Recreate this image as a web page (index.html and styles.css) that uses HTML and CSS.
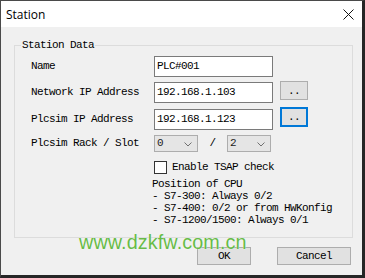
FILE: index.html
```html
<!DOCTYPE html>
<html>
<head>
<meta charset="utf-8">
<title>Station</title>
<link rel="stylesheet" href="styles.css">
</head>
<body>
<div class="window">
  <div class="titlebar">
    <span class="title">Station</span>
    <svg class="close" width="11" height="11" viewBox="0 0 11 11"><path d="M0.5 0.5 L10.5 10.5 M10.5 0.5 L0.5 10.5" stroke="#111" stroke-width="1" fill="none"/></svg>
  </div>
  <div class="content">
    <div class="group">
      <span class="legend">Station Data</span>
      <div class="row">
        <span class="lbl">Name</span>
        <div class="input">PLC#001</div>
      </div>
      <div class="row row-tall">
        <span class="lbl">Network IP Address</span>
        <div class="input">192.168.1.103</div>
        <div class="dots">..</div>
      </div>
      <div class="row">
        <span class="lbl">Plcsim IP Address</span>
        <div class="input">192.168.1.123</div>
        <div class="dots focused">..</div>
      </div>
      <div class="row row-combo">
        <span class="lbl lbl-combo">Plcsim Rack / Slot</span>
        <div class="combo"><span>0</span><svg width="8" height="5" viewBox="0 0 8 5"><path d="M0.5 0.5 L4 4 L7.5 0.5" stroke="#707070" fill="none"/></svg></div>
        <span class="slash">/</span>
        <div class="combo"><span>2</span><svg width="8" height="5" viewBox="0 0 8 5"><path d="M0.5 0.5 L4 4 L7.5 0.5" stroke="#707070" fill="none"/></svg></div>
      </div>
      <div class="extra">
        <div class="check"><span class="box"></span><span class="check-text">Enable TSAP check</span></div>
        <div class="info">
          <div>Position of CPU</div>
          <div>- S7-300: Always 0/2</div>
          <div>- S7-400: 0/2 or from HWKonfig</div>
          <div>- S7-1200/1500: Always 0/1</div>
        </div>
      </div>
    </div>
    <div class="buttons">
      <div class="btn ok">OK</div>
      <div class="btn cancel">Cancel</div>
    </div>
  </div>
  <div class="watermark">www.dzkfw.com.cn</div>
</div>
</body>
</html>
```
FILE: styles.css
```css
html, body {
  margin: 0;
  padding: 0;
  background: #222;
}
body {
  font-family: "Liberation Mono", "DejaVu Sans Mono", monospace;
  font-size: 11px;
  letter-spacing: -0.6px;
  color: #000;
}
.window {
  position: relative;
  width: 365px;
  height: 278px;
  box-sizing: border-box;
  border-style: solid;
  border-width: 1px 3px 3px 1px;
  border-color: #4a4a4a #262626 #262626 #4a4a4a;
  background: #f0f0f0;
  overflow: hidden;
}
.titlebar {
  height: 26px;
  background: #fff;
  display: flex;
  align-items: center;
  padding: 0 8px 0 5px;
}
.title {
  font-family: "Open Sans", "Noto Sans", sans-serif;
  font-size: 12px;
  letter-spacing: 0;
  color: #000;
}
.close {
  margin-left: auto;
  display: block;
}
.content {
  padding: 18px 9px 0 13px;
}
.group {
  position: relative;
  height: 193px;
  box-sizing: border-box;
  border: 1px solid #dcdcdc;
  padding: 10px 0 0 16px;
}
.legend {
  position: absolute;
  left: 6px;
  top: -7px;
  padding: 0 1px;
  background: #f0f0f0;
  line-height: 12px;
}
.row {
  display: flex;
  align-items: flex-start;
  height: 21px;
}
.row + .row {
  margin-top: 5px;
}
.row-tall {
  height: 22px;
}
.row-combo {
  height: 17px;
}
.lbl {
  width: 123px;
  line-height: 21px;
  flex: none;
}
.lbl-combo {
  line-height: 17px;
}
.input {
  width: 119px;
  height: 21px;
  box-sizing: border-box;
  border: 1px solid #7a7a7a;
  background: #fff;
  padding-left: 2px;
  line-height: 19px;
  flex: none;
}
.dots {
  width: 28px;
  height: 19px;
  box-sizing: border-box;
  margin: -1px 0 0 7px;
  border: 1px solid #adadad;
  background: #e1e1e1;
  text-align: center;
  line-height: 19px;
  flex: none;
}
.dots.focused {
  height: 20px;
  margin-top: -2px;
  border: 2px solid #0078d7;
  line-height: 17px;
}
.combo {
  width: 44px;
  height: 17px;
  box-sizing: border-box;
  border: 1px solid #adadad;
  background: #e5e5e5;
  display: flex;
  align-items: center;
  justify-content: space-between;
  padding: 0 5px 0 2px;
  line-height: 15px;
  color: #222;
}
.combo svg {
  display: block;
  margin-top: 2px;
}
.slash {
  width: 29px;
  text-align: center;
  line-height: 17px;
}
.extra {
  margin: 9px 0 0 123px;
}
.check {
  display: flex;
  align-items: center;
  height: 13px;
}
.box {
  width: 13px;
  height: 13px;
  box-sizing: border-box;
  border: 1px solid #333;
  background: #fff;
}
.check-text {
  margin-left: 5px;
  line-height: 13px;
}
.info {
  margin: 4px 0 0 -2px;
  line-height: 12px;
}
.buttons {
  display: flex;
  justify-content: flex-end;
  gap: 26px;
  margin-top: 9px;
  padding-right: 2px;
}
.btn {
  height: 18px;
  box-sizing: border-box;
  border: 1px solid #adadad;
  background: #e1e1e1;
  text-align: center;
  line-height: 16px;
}
.ok {
  width: 54px;
}
.cancel {
  width: 74px;
}
.watermark {
  position: absolute;
  left: 78px;
  top: 232px;
  font-family: "Liberation Sans", Arial, sans-serif;
  font-size: 19.8px;
  line-height: 1;
  letter-spacing: 0.1px;
  color: #67bb48;
  text-shadow: 0 0 1px #fff;
}
```
